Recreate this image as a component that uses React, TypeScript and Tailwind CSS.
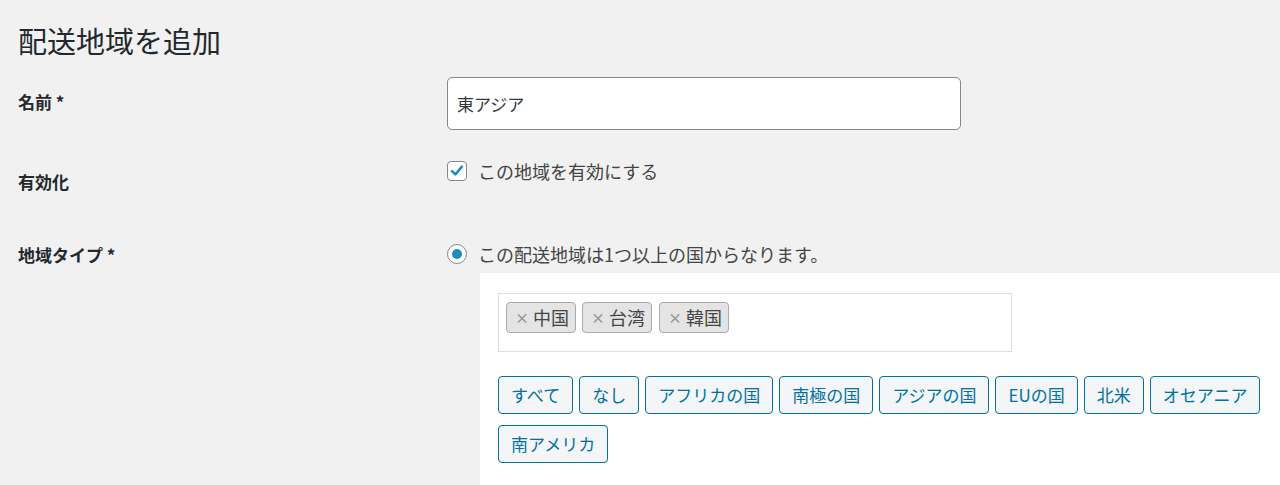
import React from "react";

const font = { fontFamily: '"Noto Sans CJK JP", "Noto Sans", sans-serif' };

const regions = ["すべて", "なし", "アフリカの国", "南極の国", "アジアの国", "EUの国", "北米", "オセアニア", "南アメリカ"];
const selected = ["中国", "台湾", "韓国"];

export default function App() {
  return (
    <div style={font} className="h-[485px] w-[1280px] overflow-hidden bg-[#f1f1f1] text-[#444]">
      <div className="pl-[18px]">
        <h1 className="pt-[22px] text-[29px] leading-[36px] font-normal text-[#23282d]">配送地域を追加</h1>

        {/* 名前 */}
        <div className="mt-[19px] flex">
          <div className="w-[429px] shrink-0 pt-[13px] text-[17px] leading-[24px] font-bold text-[#23282d]">名前 *</div>
          <input
            defaultValue="東アジア"
            className="h-[53px] w-[514px] rounded-[5px] border-[1.5px] border-[#7e8993] bg-white px-[9px] text-[17px] text-[#32373c] outline-none"
            style={font}
          />
        </div>

        {/* 有効化 */}
        <div className="mt-[20px] flex h-[80px]">
          <div className="w-[429px] shrink-0 pt-[20px] text-[17px] leading-[24px] font-bold text-[#23282d]">有効化</div>
          <label className="mt-[9px] flex h-[24px] items-center gap-[11px] text-[18px] leading-[24px]">
            <span className="flex h-[20px] w-[20px] shrink-0 items-center justify-center rounded-[4px] border-[1.5px] border-[#7e8993] bg-white">
              <svg viewBox="0 0 20 20" className="h-[18px] w-[18px]">
                <path d="M4.5 10.2 L8.2 13.8 L15.5 5.2" fill="none" stroke="#1e8cbe" strokeWidth="2.8" strokeLinecap="round" strokeLinejoin="round" />
              </svg>
            </span>
            この地域を有効にする
          </label>
        </div>

        {/* 地域タイプ */}
        <div className="flex">
          <div className="w-[429px] shrink-0 pt-[13px] text-[17px] leading-[24px] font-bold text-[#23282d]">地域タイプ *</div>
          <div className="min-w-0 flex-1 pt-[12px]">
            <label className="flex h-[24px] items-center gap-[11px] text-[18px] leading-[24px]">
              <span className="flex h-[20px] w-[20px] shrink-0 items-center justify-center rounded-full border-[1.5px] border-[#7e8993] bg-white">
                <span className="h-[10px] w-[10px] rounded-full bg-[#1e8cbe]" />
              </span>
              この配送地域は1つ以上の国からなります。
            </label>
            <div className="ml-[33px] mt-[7px] h-[300px] bg-white pl-[18px] pt-[20px] pr-[10px]">
              <div className="flex h-[59px] w-[514px] items-start gap-[6px] border-[1.5px] border-[#ddd] pl-[7px] pt-[8px]">
                {selected.map((s, i) => (
                  <span
                    key={s}
                    className={`flex h-[31px] items-center rounded-[4px] border-[1.5px] border-[#aaa] bg-[#e4e4e4] pl-[8px] pr-[6px] text-[18px] text-[#444] ${i === 2 ? "ml-[1px]" : ""}`}
                  >
                    <span className="mr-[4px] text-[14px] font-bold text-[#999]">×</span>
                    {s}
                  </span>
                ))}
              </div>
              <div className="mt-[24px] flex flex-wrap gap-x-[6px] gap-y-[11px]">
                {regions.map((r) => (
                  <button
                    key={r}
                    style={font}
                    className="h-[38px] rounded-[4px] border-[1.5px] border-[#0071a1] bg-[#f3f5f6] px-[12px] text-[17px] leading-[24px] text-[#0071a1]"
                  >
                    {r}
                  </button>
                ))}
              </div>
            </div>
          </div>
        </div>
      </div>
    </div>
  );
}
